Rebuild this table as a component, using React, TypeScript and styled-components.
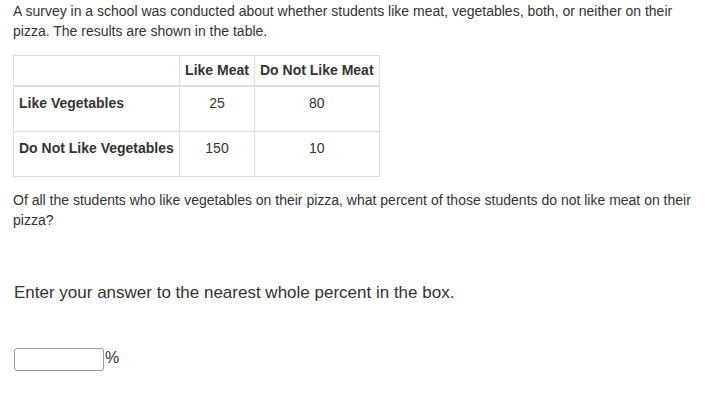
import styled, { createGlobalStyle } from 'styled-components';

const GlobalStyle = createGlobalStyle`
  body {
    margin: 0;
    background: #ffffff;
    font-family: "Liberation Sans", Arial, sans-serif;
    color: #333333;
  }
`;

const Page = styled.div`
  padding: 1px 6px 0 13px;
  width: 705px;
  box-sizing: border-box;
`;

const Prompt = styled.p`
  margin: 0;
  font-size: 14px;
  line-height: 20px;
`;

const Survey = styled.table`
  margin: 14px 0 13px 0;
  border-collapse: collapse;
  border: 1px solid #dddddd;
  font-size: 14px;
  line-height: 16px;
`;

const HeadCell = styled.th<{ $width?: number }>`
  width: ${props => (props.$width ? `${props.$width}px` : 'auto')};
  height: 30px;
  padding: 0 5px;
  border: 1px solid #dddddd;
  border-bottom: 2px solid #dddddd;
  font-weight: 700;
  text-align: center;
  vertical-align: middle;
  white-space: nowrap;
  box-sizing: border-box;
`;

const RowLabel = styled.th`
  height: 36px;
  padding: 8px 5px 0 5px;
  border: 1px solid #dddddd;
  font-weight: 700;
  text-align: left;
  vertical-align: top;
  white-space: nowrap;
`;

const Count = styled.td`
  padding: 8px 5px 0 5px;
  border: 1px solid #dddddd;
  text-align: center;
  vertical-align: top;
`;

const Instruction = styled.p`
  margin: 52px 0 0 1px;
  font-size: 17px;
  line-height: 22px;
`;

const AnswerRow = styled.div`
  display: flex;
  align-items: center;
  margin: 44px 0 0 1px;
  font-size: 16px;
`;

const AnswerBox = styled.input`
  width: 90px;
  height: 23px;
  box-sizing: border-box;
  border: 1px solid #9a9a9a;
  border-radius: 3px;
  padding: 0 4px;
  margin: 0;
  font-family: inherit;
`;

const Unit = styled.span`
  margin-left: 1px;
  margin-top: -2px;
  line-height: 18px;
`;

const rows = [
  { label: 'Like Vegetables', meat: 25, noMeat: 80 },
  { label: 'Do Not Like Vegetables', meat: 150, noMeat: 10 },
];

const App = () => {
  return (
    <>
      <GlobalStyle />
      <Page>
        <Prompt>
          A survey in a school was conducted about whether students like meat, vegetables, both, or neither on their
          pizza. The results are shown in the table.
        </Prompt>
        <Survey>
          <thead>
            <tr>
              <HeadCell $width={166}></HeadCell>
              <HeadCell $width={75}>Like Meat</HeadCell>
              <HeadCell $width={123}>Do Not Like Meat</HeadCell>
            </tr>
          </thead>
          <tbody>
            {rows.map(row => (
              <tr key={row.label}>
                <RowLabel>{row.label}</RowLabel>
                <Count>{row.meat}</Count>
                <Count>{row.noMeat}</Count>
              </tr>
            ))}
          </tbody>
        </Survey>
        <Prompt>
          Of all the students who like vegetables on their pizza, what percent of those students do not like meat on their
          pizza?
        </Prompt>
        <Instruction>Enter your answer to the nearest whole percent in the box.</Instruction>
        <AnswerRow>
          <AnswerBox type='text' aria-label='answer' />
          <Unit>%</Unit>
        </AnswerRow>
      </Page>
    </>
  );
};

export default App;
